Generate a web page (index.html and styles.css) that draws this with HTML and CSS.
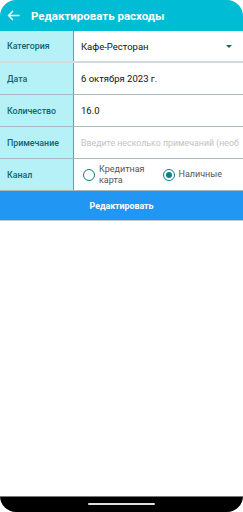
FILE: index.html
```html
<!DOCTYPE html>
<html lang="ru">
<head>
    <meta charset="UTF-8">
    <meta name="viewport" content="width=device-width, initial-scale=1.0">
    <title>Редактировать расходы</title>
    <link rel="stylesheet" href="styles.css">
</head>
<body>
    <div class="screen">
        <header class="toolbar">
            <svg class="back" width="13" height="11" viewBox="0 0 13 11">
                <path d="M12.5 5.5H1.5M6 1L1.5 5.5L6 10" fill="none" stroke="#fff" stroke-width="1.4"/>
            </svg>
            <h1>Редактировать расходы</h1>
        </header>

        <div class="form">
            <div class="row">
                <div class="label">Категория</div>
                <div class="value spinner">
                    <span>Кафе-Ресторан</span>
                    <span class="caret"></span>
                </div>
            </div>
            <div class="row">
                <div class="label">Дата</div>
                <div class="value">6 октября 2023 г.</div>
            </div>
            <div class="row">
                <div class="label">Количество</div>
                <div class="value">16.0</div>
            </div>
            <div class="row">
                <div class="label">Примечание</div>
                <div class="value hint">Введите несколько примечаний (необ</div>
            </div>
            <div class="row">
                <div class="label">Канал</div>
                <div class="value radios">
                    <label class="radio">
                        <span class="dot"></span>
                        <span class="radio-text">Кредитная<br>карта</span>
                    </label>
                    <label class="radio checked">
                        <span class="dot"></span>
                        <span class="radio-text">Наличные</span>
                    </label>
                </div>
            </div>
        </div>

        <button class="submit">Редактировать</button>

        <div class="spacer"></div>

        <div class="navbar"><span class="pill"></span></div>
    </div>
</body>
</html>
```

FILE: styles.css
```css
/* Reset dasar */
* {
    margin: 0;
    padding: 0;
    box-sizing: border-box;
}

body {
    font-family: Roboto, "Noto Sans", sans-serif;
    background: #fff;
    width: 243px;
    height: 512px;
    overflow: hidden;
}

.screen {
    height: 512px;
    display: flex;
    flex-direction: column;
    border-radius: 16px 16px 0 0;
    overflow: hidden;
}

/* Toolbar */
.toolbar {
    height: 31px;
    background: #00bcd4;
    display: flex;
    align-items: center;
    padding-left: 7px;
    gap: 11px;
}

.toolbar h1 {
    color: #fff;
    font-size: 11.5px;
    font-weight: 700;
}

/* Form */
.row {
    display: flex;
    height: 32px;
    border-bottom: 1px solid #a8b9bc;
}

.label {
    width: 74px;
    background: #b6f1f8;
    border-right: 1px solid #6f9ba0;
    color: #0f656d;
    font-size: 8.8px;
    font-weight: 500;
    display: flex;
    align-items: center;
    padding-left: 7px;
}

.value {
    flex: 1;
    display: flex;
    align-items: center;
    padding-left: 7px;
    font-size: 9.5px;
    color: #111;
    white-space: nowrap;
    overflow: hidden;
}

.row:first-child {
    border-bottom: 2px solid #d3dcdd;
}

.spinner {
    justify-content: space-between;
    padding-right: 11px;
}

.caret {
    width: 0;
    height: 0;
    border-left: 3px solid transparent;
    border-right: 3px solid transparent;
    border-top: 3px solid #1d5f66;
}

.hint {
    color: #c2c2c2;
    font-size: 8.8px;
    padding-right: 4px;
}

/* Radio */
.radios {
    gap: 18px;
    padding-left: 9px;
}

.radio {
    display: flex;
    align-items: center;
    gap: 4px;
}

.dot {
    width: 12px;
    height: 12px;
    border: 1.5px solid #0d7f88;
    border-radius: 50%;
    display: flex;
    align-items: center;
    justify-content: center;
}

.checked .dot::after {
    content: "";
    width: 6px;
    height: 6px;
    border-radius: 50%;
    background: #0d7f88;
}

.radio-text {
    font-size: 9px;
    line-height: 11px;
    color: #555;
}

/* Tombol */
.submit {
    height: 30px;
    border: none;
    border-bottom: 1px solid #c9c9c9;
    background: #2196f3;
    color: #fff;
    font-family: inherit;
    font-size: 8.8px;
    font-weight: 700;
}

.spacer {
    flex: 1;
}

/* Navigasi bawah */
.navbar {
    height: 16px;
    background: #000;
    border-top: 1px solid #777;
    border-radius: 0 0 16px 16px;
    display: flex;
    justify-content: center;
    padding-top: 6px;
}

.pill {
    width: 67px;
    height: 2px;
    background: #ddd;
    border-radius: 1px;
}
```
